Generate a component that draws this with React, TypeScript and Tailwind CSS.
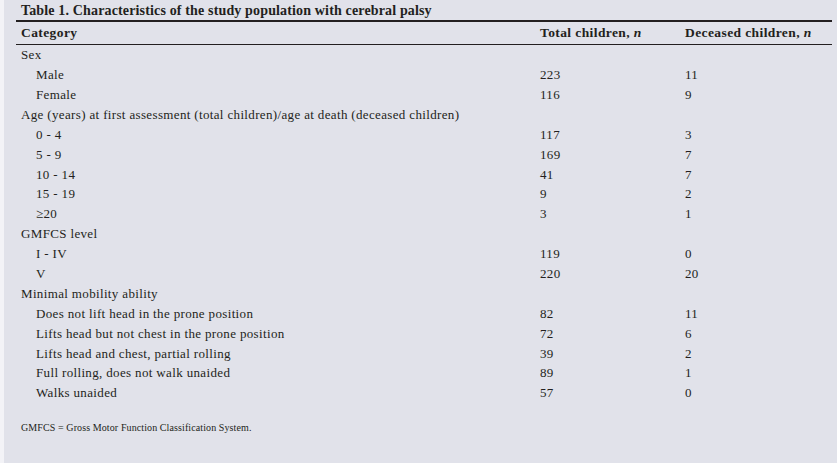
const rows: { label: string; total?: string; deceased?: string; sub?: boolean }[] = [
  { label: "Sex" },
  { label: "Male", total: "223", deceased: "11", sub: true },
  { label: "Female", total: "116", deceased: "9", sub: true },
  { label: "Age (years) at first assessment (total children)/age at death (deceased children)" },
  { label: "0 - 4", total: "117", deceased: "3", sub: true },
  { label: "5 - 9", total: "169", deceased: "7", sub: true },
  { label: "10 - 14", total: "41", deceased: "7", sub: true },
  { label: "15 - 19", total: "9", deceased: "2", sub: true },
  { label: "≥20", total: "3", deceased: "1", sub: true },
  { label: "GMFCS level" },
  { label: "I - IV", total: "119", deceased: "0", sub: true },
  { label: "V", total: "220", deceased: "20", sub: true },
  { label: "Minimal mobility ability" },
  { label: "Does not lift head in the prone position", total: "82", deceased: "11", sub: true },
  { label: "Lifts head but not chest in the prone position", total: "72", deceased: "6", sub: true },
  { label: "Lifts head and chest, partial rolling", total: "39", deceased: "2", sub: true },
  { label: "Full rolling, does not walk unaided", total: "89", deceased: "1", sub: true },
  { label: "Walks unaided", total: "57", deceased: "0", sub: true },
];

export default function App() {
  return (
    <div className="flex h-[463px] w-[837px] bg-[#f3f3f7]">
      <div
        className="ml-[4px] flex-1 bg-[#e1e2ea] text-[#231f20]"
        style={{ fontFamily: '"Liberation Serif", "DejaVu Serif", serif' }}
      >
        <div className="ml-[12px] mr-[5px]">
          <div className="flex h-[20px] items-center pl-[5px] text-[14px] font-bold tracking-[0.15px]">
            Table 1. Characteristics of the study population with cerebral palsy
          </div>
          <div className="h-[2px] bg-[#231f20]" />
          <div className="grid h-[22px] grid-cols-[524px_145px_1fr] items-center text-[13.5px] font-bold tracking-[0.4px]">
            <div className="pl-[5px]">Category</div>
            <div>
              Total children, <i>n</i>
            </div>
            <div>
              Deceased children, <i>n</i>
            </div>
          </div>
          <div className="h-px bg-[#231f20]" />
          <div className="flex flex-col">
            {rows.map((r) => (
              <div
                key={r.label}
                className="grid h-[19.9px] grid-cols-[524px_145px_1fr] items-center text-[13px] tracking-[0.35px]"
              >
                <div className={r.sub ? "pl-[20px]" : "pl-[5px]"}>{r.label}</div>
                <div>{r.total}</div>
                <div>{r.deceased}</div>
              </div>
            ))}
          </div>
          <div className="mt-[17px] pl-[5px] text-[10px] tracking-[0.1px]">
            GMFCS = Gross Motor Function Classification System.
          </div>
        </div>
      </div>
    </div>
  );
}
